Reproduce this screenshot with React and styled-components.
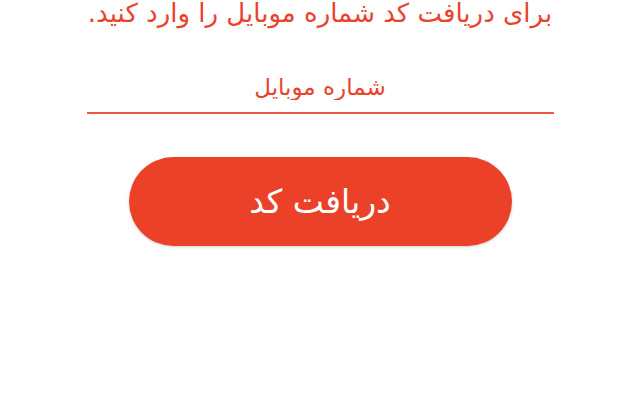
import React from 'react'
import styled, { createGlobalStyle } from 'styled-components'

const GlobalStyle = createGlobalStyle`
  html, body {
    margin: 0;
    padding: 0;
    background: #ffffff;
    overflow: hidden;
  }
  body {
    font-family: "DejaVu Sans", "Noto Sans", sans-serif;
  }
`

const Page = styled.div`
  width: 640px;
  height: 400px;
  direction: rtl;
  display: flex;
  flex-direction: column;
  align-items: center;
  overflow: hidden;
`

const Hint = styled.p`
  margin: -7px 0 0;
  width: 480px;
  text-align: center;
  color: #e9432d;
  font-size: 26px;
  line-height: 40px;
`

const Field = styled.label`
  margin-top: 41px;
  width: 467px;
  display: flex;
  flex-direction: column;
  align-items: center;
  border-bottom: 2px solid #f05843;
`

const Input = styled.input`
  width: 100%;
  border: none;
  outline: none;
  background: transparent;
  text-align: center;
  font-family: inherit;
  font-size: 23px;
  color: #e9432d;
  padding: 0 0 12px;
  direction: rtl;
  &::placeholder {
    color: #e9432d;
    opacity: 1;
  }
`

const Button = styled.button`
  margin-top: 43px;
  width: 383px;
  height: 89px;
  border: none;
  border-radius: 45px;
  background: #eb4129;
  color: #ffffff;
  font-family: inherit;
  font-size: 33px;
  box-shadow: 0 1px 3px rgba(0, 0, 0, 0.18);
  cursor: pointer;
`

export default function App() {
  return (
    <>
      <GlobalStyle />
      <Page>
        <Hint>برای دریافت کد شماره موبایل را وارد کنید.</Hint>
        <Field>
          <Input placeholder="شماره موبایل" />
        </Field>
        <Button>دریافت کد</Button>
      </Page>
    </>
  )
}
